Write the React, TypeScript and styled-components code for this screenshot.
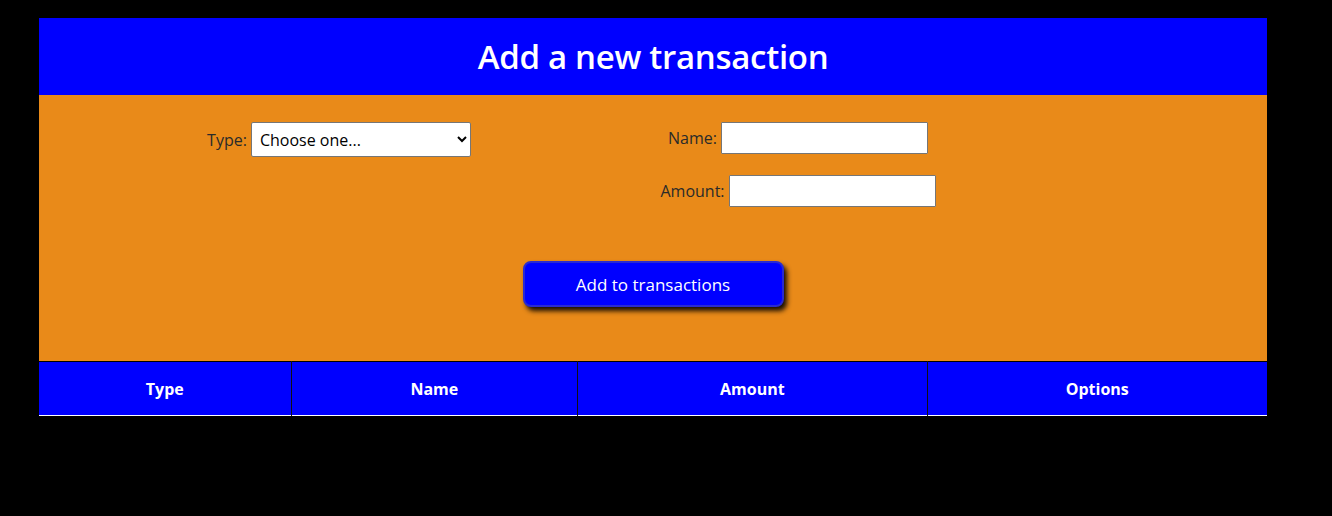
import React from "react";
import styled, { createGlobalStyle } from "styled-components";

const GlobalStyle = createGlobalStyle`
  html, body {
    margin: 0;
    background: #000;
    font-family: "Open Sans", "Noto Sans", sans-serif;
  }
`;

const Page = styled.div`
  padding: 18px 65px 0 39px;
`;

const Header = styled.header`
  background: #0000ff;
  height: 77px;
  display: flex;
  align-items: center;
  justify-content: center;
  h1 {
    margin: 0;
    color: #fff;
    font-size: 33px;
    font-weight: 600;
    letter-spacing: -0.3px;
  }
`;

const FormArea = styled.form`
  background: #e98a19;
  padding: 27px 0 54px;
  display: flex;
  flex-direction: column;
  align-items: center;
`;

const Fields = styled.div`
  display: flex;
  align-self: stretch;
`;

const Column = styled.div<{ $width: number }>`
  width: ${(p) => p.$width}px;
  display: flex;
  flex-direction: column;
  align-items: center;
  gap: 21px;
`;

const Field = styled.label`
  display: flex;
  align-items: center;
  gap: 4px;
  font-size: 16px;
  color: #2a2a2a;
`;

const Select = styled.select`
  width: 220px;
  height: 35px;
  font-family: inherit;
  font-size: 16px;
  padding: 0 4px;
  background: #fff;
  border: 1px solid #767676;
  border-radius: 2px;
  color: #000;
`;

const Input = styled.input`
  box-sizing: border-box;
  width: 207px;
  height: 32px;
  padding: 1px 2px;
  border: 1px solid #767676;
  border-radius: 1px;
  font-family: inherit;
  font-size: 16px;
`;

const Button = styled.button`
  margin-top: 54px;
  width: 261px;
  height: 46px;
  background: #0000ff;
  color: #fff;
  border: 2px solid #2a2ad0;
  border-radius: 8px;
  box-shadow: 3px 4px 5px rgba(0, 0, 0, 0.9);
  font-family: inherit;
  font-size: 17px;
`;

const Table = styled.table`
  width: 100%;
  border-collapse: collapse;
  background: #0000ff;
  border-top: 1px solid #000;
  border-bottom: 1px solid #fff;
`;

const Th = styled.th<{ $width: number }>`
  width: ${(p) => p.$width}px;
  height: 53px;
  padding: 0;
  color: #fff;
  font-size: 16px;
  font-weight: 700;
  border-left: 1px solid #111;
  &:first-child {
    border-left: none;
  }
`;

export default function App() {
  return (
    <Page>
      <GlobalStyle />
      <Header>
        <h1>Add a new transaction</h1>
      </Header>
      <FormArea onSubmit={(e) => e.preventDefault()}>
        <Fields>
          <Column $width={600}>
            <Field>
              Type:
              <Select defaultValue="">
                <option value="">Choose one...</option>
                <option value="income">Income</option>
                <option value="expense">Expense</option>
              </Select>
            </Field>
          </Column>
          <Column $width={318}>
            <Field>
              Name:
              <Input type="text" />
            </Field>
            <Field>
              Amount:
              <Input type="text" />
            </Field>
          </Column>
        </Fields>
        <Button type="submit">Add to transactions</Button>
      </FormArea>
      <Table>
        <thead>
          <tr>
            <Th $width={252}>Type</Th>
            <Th $width={286}>Name</Th>
            <Th $width={349}>Amount</Th>
            <Th $width={340}>Options</Th>
          </tr>
        </thead>
      </Table>
    </Page>
  );
}
